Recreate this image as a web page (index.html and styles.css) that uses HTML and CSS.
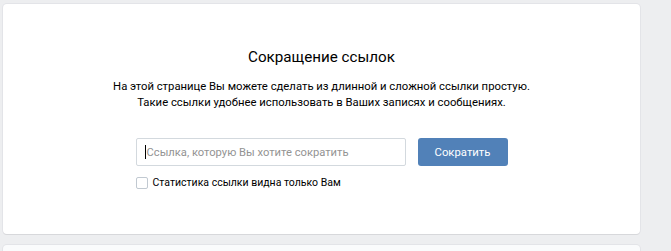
FILE: index.html
```html
<!DOCTYPE html>
<html lang="ru">
<head>
<meta charset="utf-8">
<link rel="stylesheet" href="styles.css">
</head>
<body>
<div class="page">
  <div class="card">
    <h1 class="title">Сокращение ссылок</h1>
    <p class="desc">На этой странице Вы можете сделать из длинной и сложной ссылки простую.<br>Такие ссылки удобнее использовать в Ваших записях и сообщениях.</p>
    <div class="form">
      <div class="row">
        <div class="input"><span class="caret"></span><span class="ph">Ссылка, которую Вы хотите сократить</span></div>
        <button class="btn">Сократить</button>
      </div>
      <label class="check"><span class="box"></span><span>Статистика ссылки видна только Вам</span></label>
    </div>
  </div>
  <div class="card2"></div>
</div>
</body>
</html>
```
FILE: styles.css
```css
html, body { margin: 0; padding: 0; }
body {
  background: #edeef0;
  font-family: Roboto, "Open Sans", "DejaVu Sans", sans-serif;
  color: #000;
  width: 671px;
  height: 251px;
  overflow: hidden;
}
.page {
  padding: 4px 31px 0 3px;
  display: flex;
  flex-direction: column;
  gap: 11px;
}
.card {
  background: #fff;
  border-radius: 4px;
  box-shadow: 0 1px 0 0 #d7d8db, 0 0 0 1px #e3e4e8;
  height: 230px;
  box-sizing: border-box;
  padding-top: 43px;
  display: flex;
  flex-direction: column;
  align-items: center;
}
.card2 {
  background: #fafbfc;
  border-radius: 4px 4px 0 0;
  box-shadow: 0 0 0 1px #e3e4e8;
  height: 6px;
}
.title {
  margin: 0;
  font-size: 15.2px;
  font-weight: 400;
  line-height: 20px;
  color: #000;
}
.desc {
  margin: 12px 0 0;
  font-size: 11.3px;
  line-height: 15.5px;
  text-align: center;
  color: #000;
}
.form {
  margin-top: 28px;
  width: 372px;
}
.row {
  display: flex;
  gap: 12px;
}
.input {
  width: 270px;
  height: 28px;
  box-sizing: border-box;
  border: 1px solid #d3d9de;
  border-radius: 2px;
  display: flex;
  align-items: center;
  padding-left: 8px;
  font-size: 11.2px;
  color: #939393;
}
.caret {
  width: 1px;
  height: 14px;
  background: #000;
  margin-right: 1px;
}
.btn {
  width: 90px;
  height: 28px;
  border: 0;
  border-radius: 3px;
  background: #5181b8;
  color: #fff;
  font-family: inherit;
  font-size: 11.3px;
  padding: 0;
}
.check {
  margin-top: 10px;
  display: flex;
  align-items: center;
  gap: 5px;
  font-size: 10.5px;
  color: #000;
}
.box {
  width: 12px;
  height: 12px;
  box-sizing: border-box;
  border: 1px solid #c1c9d1;
  border-radius: 2px;
  background: #fff;
}
```
